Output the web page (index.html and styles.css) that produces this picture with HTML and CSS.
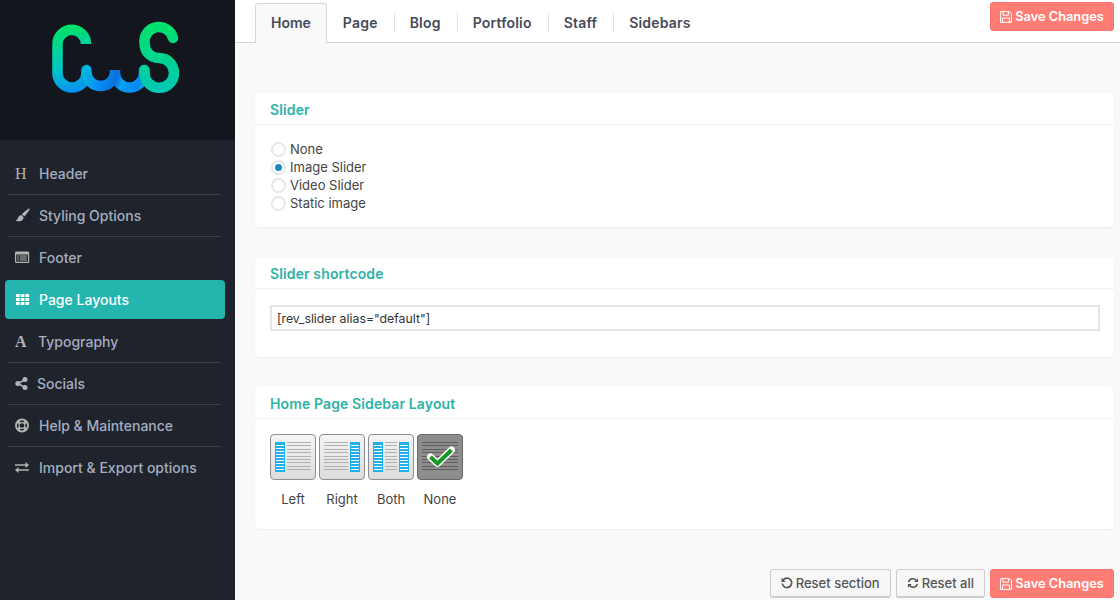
FILE: index.html
```html
<!DOCTYPE html>
<html lang="en">
<head>
<meta charset="utf-8">
<title>Theme Options</title>
<link rel="stylesheet" href="styles.css">
</head>
<body>
<aside class="sidebar">
  <div class="brand">
    <svg class="logo" width="235" height="140" viewBox="0 0 235 140" fill="none" stroke-width="10.5" stroke-linecap="round">
      <defs>
        <linearGradient id="gc" gradientUnits="userSpaceOnUse" x1="70" y1="28" x2="84" y2="92">
          <stop offset="0" stop-color="#00e06c"/><stop offset=".55" stop-color="#00c8c4"/><stop offset="1" stop-color="#0a8cf5"/>
        </linearGradient>
        <linearGradient id="gu" gradientUnits="userSpaceOnUse" x1="86" y1="70" x2="146" y2="90">
          <stop offset="0" stop-color="#00b4e0"/><stop offset=".25" stop-color="#0890f8"/><stop offset=".5" stop-color="#0a70d8"/><stop offset=".6" stop-color="#08a0f4"/><stop offset=".85" stop-color="#0888f4"/><stop offset="1" stop-color="#00b8d0"/>
        </linearGradient>
        <linearGradient id="gs" gradientUnits="userSpaceOnUse" x1="160" y1="26" x2="160" y2="92">
          <stop offset="0" stop-color="#00e06c"/><stop offset="1" stop-color="#00c8b4"/>
        </linearGradient>
      </defs>
      <path stroke="url(#gc)" d="M86 43V44A14.200 14.200 0 0 0 57.500 44V73A14.500 14.500 0 0 0 86.500 73"/>
      <path stroke="url(#gu)" d="M86.500 70V73A14.300 14.300 0 0 0 115 73V70V73A14.500 14.500 0 0 0 144 73V70"/>
      <path stroke="url(#gs)" d="M173 38A14.500 14.500 0 0 0 144.500 43C144.500 52 151 58 159 58C168 58 174 65 174 73A14.700 14.700 0 0 1 144.500 73V70"/>
    </svg>
  </div>
  <ul class="nav">
    <li class="nav-item"><span class="nav-icon glyph">H</span>Header</li>
    <li class="nav-item"><span class="nav-icon"><svg width="15" height="15" viewBox="0 0 15 15"><path fill="currentColor" d="M14.400.6c.4.3.2 1-.3 1.700C12.800 4.300 10.800 7.200 9.300 8.500L6.800 6.300C8.200 4.700 11.200 2.400 13 1c.6-.4 1.100-.6 1.400-.4zM6.200 7l2.400 2.200C8.500 11.600 6.700 13.300 4.300 13.300 2.600 13.300 1 12.700.4 12.300c1.200 0 2.100-.6 2.400-1.700C3.100 8.800 4.500 7.300 6.200 7z"/></svg></span>Styling Options</li>
    <li class="nav-item flat"><span class="nav-icon"><svg width="15" height="15" viewBox="0 0 15 15"><path fill="currentColor" fill-rule="evenodd" d="M1.200 1.500h11.800a1.200 1.200 0 0 1 1.200 1.200v9a1.200 1.200 0 0 1-1.200 1.200H1.200A1.200 1.200 0 0 1 0 11.700v-9A1.200 1.200 0 0 1 1.200 1.500zM1.200 4.500v7.200h11.800V4.500zM2.200 5.600h1.600v1H2.200zM4.800 5.600h7.100v1H4.800zM2.200 7.600h1.600v1H2.200zM4.800 7.600h7.100v1H4.800zM2.200 9.600h1.600v1H2.200zM4.800 9.600h7.100v1H4.800z"/></svg></span>Footer</li>
    <li class="nav-item active"><span class="nav-icon"><svg width="15" height="15" viewBox="0 0 15 15"><path fill="currentColor" d="M1 2h3.700v3H1zM5.700 2h3.700v3H5.700zM10.400 2h3.700v3h-3.700zM1 6h3.700v3H1zM5.700 6h3.700v3H5.700zM10.400 6h3.700v3h-3.700zM1 10h3.700v3H1zM5.700 10h3.700v3H5.700zM10.400 10h3.700v3h-3.700z"/></svg></span>Page Layouts</li>
    <li class="nav-item"><span class="nav-icon nav-icon-a glyph bold">A</span>Typography</li>
    <li class="nav-item"><span class="nav-icon nav-icon-s"><svg width="13" height="15" viewBox="0 0 13 15"><path fill="none" stroke="currentColor" stroke-width="1.500" d="M10 3.500 3 7.500l7 4"/><circle fill="currentColor" cx="2.800" cy="7.500" r="2.500"/><circle fill="currentColor" cx="10" cy="3.400" r="2.500"/><circle fill="currentColor" cx="10" cy="11.600" r="2.500"/></svg></span>Socials</li>
    <li class="nav-item"><span class="nav-icon"><svg width="15" height="15" viewBox="0 0 15 15" fill="none" stroke="currentColor"><circle cx="7" cy="7.500" r="6" stroke-width="1.900"/><circle cx="7" cy="7.500" r="2.900" stroke-width="1.100"/><path stroke-width="2.600" d="M2.800 3.300 5 5.500M11.200 3.300 9 5.500M2.800 11.700 5 9.500M11.200 11.700 9 9.500"/></svg></span>Help &amp; Maintenance</li>
    <li class="nav-item flat"><span class="nav-icon"><svg width="15" height="15" viewBox="0 0 15 15"><path fill="currentColor" d="M0 4.200h10.500V2l3.500 3-3.500 3V5.800H0zM14 9.200H3.500V7L0 10l3.500 3v-2.200H14z"/></svg></span>Import &amp; Export options</li>
  </ul>
</aside>
<main class="main">
  <header class="topbar">
    <nav class="tabs">
      <span class="tab current">Home</span>
      <span class="tab">Page</span>
      <span class="tab">Blog</span>
      <span class="tab">Portfolio</span>
      <span class="tab">Staff</span>
      <span class="tab">Sidebars</span>
    </nav>
    <button class="btn save"><svg width="12" height="12" viewBox="0 0 12 12" fill="none" stroke="currentColor"><path d="M.6.600h8.800l2 2v8.800H.6z"/><path d="M3 .8v3.400h5.400V.8M2.600 11V7h6.800v4"/></svg>Save Changes</button>
  </header>
  <section class="panel first">
    <h2 class="panel-title">Slider</h2>
    <div class="panel-body radios">
      <label class="radio"><span class="dot"></span>None</label>
      <label class="radio"><span class="dot on"></span>Image Slider</label>
      <label class="radio"><span class="dot"></span>Video Slider</label>
      <label class="radio"><span class="dot"></span>Static image</label>
    </div>
  </section>
  <section class="panel">
    <h2 class="panel-title">Slider shortcode</h2>
    <div class="panel-body shortcode">
      <input class="text-input" type="text" value='[rev_slider alias="default"]'>
    </div>
  </section>
  <section class="panel">
    <h2 class="panel-title">Home Page Sidebar Layout</h2>
    <div class="panel-body layouts">
      <div class="layout"><div class="tile"><i class="bar"></i><i class="lines"></i></div>Left</div>
      <div class="layout"><div class="tile"><i class="lines"></i><i class="bar"></i></div>Right</div>
      <div class="layout"><div class="tile"><i class="bar"></i><i class="lines"></i><i class="bar"></i></div>Both</div>
      <div class="layout"><div class="tile selected"><i class="lines"></i>
        <svg class="check" width="28" height="22" viewBox="0 0 28 22"><path d="M3.500 11 10.500 17.500 24.500 4" fill="none" stroke="#fff" stroke-width="7" stroke-linecap="round" stroke-linejoin="round"/><path d="M3.500 11 10.500 17.500 24.500 4" fill="none" stroke="#169a24" stroke-width="4"/></svg>
      </div>None</div>
    </div>
  </section>
  <footer class="actions">
    <button class="btn plain"><svg width="12" height="12" viewBox="0 0 12 12" fill="none" stroke="currentColor" stroke-width="1.700"><path d="M2.200 3A4.700 4.700 0 1 1 1.300 6.500"/><path fill="currentColor" stroke="none" d="M.5.800V5h4.200z"/></svg>Reset section</button>
    <button class="btn plain"><svg width="12" height="12" viewBox="0 0 13 12" fill="none" stroke="currentColor" stroke-width="1.700"><path d="M1.800 5A4.600 4.600 0 0 1 10 3.300M11.200 7A4.600 4.600 0 0 1 3 8.700"/><path fill="currentColor" stroke="none" d="M12 .8V5H7.800zM1 11.200V7h4.200z"/></svg>Reset all</button>
    <button class="btn save"><svg width="12" height="12" viewBox="0 0 12 12" fill="none" stroke="currentColor"><path d="M.6.600h8.800l2 2v8.800H.6z"/><path d="M3 .8v3.400h5.400V.8M2.600 11V7h6.800v4"/></svg>Save Changes</button>
  </footer>
</main>
</body>
</html>
```
FILE: styles.css
```css
* { box-sizing: border-box; }
html, body { margin: 0; height: 100%; overflow: hidden; }
body {
  display: flex;
  font-family: Inter, "Liberation Sans", sans-serif;
  background: #f9f9f9;
  color: #444;
}

/* sidebar */
.sidebar { width: 235px; flex: none; background: #1f232b; }
.brand { height: 140px; background: #13161d; }
.logo { display: block; }
.nav { list-style: none; margin: 0; padding: 13px 0 0; }
.nav-item {
  display: flex;
  align-items: center;
  height: 42px;
  margin: 0 14px 0 8px;
  padding: 0 0 0 7px;
  border-bottom: 1px solid #3d3f43;
  color: #a5aec0;
  font-size: 14px;
  font-weight: 500;
}
.nav-item.flat { border-bottom-color: transparent; }
.nav-item.active {
  height: 39px;
  margin: 1px 10px 2px 5px;
  padding: 0 0 0 10px;
  border: 0;
  border-radius: 4px;
  background: #24b6ae;
  color: #fff;
}
.nav-icon { display: flex; width: 24px; flex: none; color: #b4b4b4; }
.active .nav-icon { color: #fff; }
.nav-icon-a { width: 23px; }
.nav-icon-s { width: 22px; }
.glyph { font: 16px/1 "Liberation Serif", serif; }
.glyph.bold { font-weight: 700; }

/* top bar */
.main { flex: 1; min-width: 0; padding-right: 6px; }
.topbar {
  display: flex;
  justify-content: space-between;
  align-items: flex-start;
  height: 43px;
  margin-right: -6px;
  padding: 2px 6px 0 20px;
  background: #fff;
  border-bottom: 1px solid #d6d6d6;
}
.tabs { display: flex; align-items: flex-start; padding-top: 1px; }
.tab {
  position: relative;
  height: 40px;
  padding: 0 16px;
  color: #454b58;
  font-size: 14px;
  font-weight: 600;
  letter-spacing: .2px;
  line-height: 40px;
}
.tab + .tab:not(:nth-child(2))::before {
  content: "";
  position: absolute;
  left: 0;
  top: 10px;
  height: 20px;
  border-left: 1px solid #e2e2e2;
}
.tab.current {
  height: 40px;
  padding: 0 15px;
  border: 1px solid #d6d6d6;
  border-bottom: 0;
  border-radius: 3px 3px 0 0;
  background: #f9f9f9;
  line-height: 38px;
  letter-spacing: 0;
}

/* panels */
.panel {
  margin: 0 0 30px 20px;
  border-radius: 5px;
  background: #fff;
  box-shadow: 0 1px 2px rgba(0, 0, 0, .05);
}
.panel.first { margin-top: 50px; }
.panel-title {
  height: 32px;
  margin: 0;
  padding: 0 15px;
  border-bottom: 1px solid #f1f1f1;
  color: #2db3a6;
  font-size: 14px;
  font-weight: 600;
  letter-spacing: .12px;
  line-height: 34px;
}
.panel-body { padding: 15px; }
.radios { padding-bottom: 15px; }
.radio {
  display: flex;
  align-items: center;
  height: 18px;
  font-size: 13px;
}
.dot {
  display: flex;
  align-items: center;
  justify-content: center;
  width: 15px;
  height: 15px;
  margin: 0 4px 0 1px;
  border: 2px solid #e4e8ec;
  border-radius: 50%;
  background: #fff;
}
.dot.on::after {
  content: "";
  width: 7px;
  height: 7px;
  border-radius: 50%;
  background: #1d86c6;
}
.shortcode { padding: 16px 14px 26px 15px; }
.text-input {
  display: block;
  width: 100%;
  height: 26px;
  padding: 0 5px;
  border: 2px solid #e4e4e4;
  background: #fff;
  color: #333;
  font: 12.300px Inter, "Liberation Sans", sans-serif;
  outline: 0;
}

/* layout picker */
.layouts { display: flex; gap: 3px; padding-bottom: 21px; }
.layout {
  width: 46px;
  color: #444;
  font-size: 13px;
  line-height: 18px;
  text-align: center;
  text-indent: -3px;
}
.tile {
  position: relative;
  display: flex;
  gap: 2px;
  height: 46px;
  margin-bottom: 10px;
  padding: 7px 4px;
  border: 1px solid #8e8e8e;
  border-radius: 4px;
  background: linear-gradient(#f4f4f4, #dcdcdc);
}
.bar {
  flex: none;
  width: 10px;
  border: 1px solid #20b0ec;
  background: repeating-linear-gradient(#20b0ec 0 2px, #fff 2px 3px);
}
.lines {
  flex: 1;
  background: repeating-linear-gradient(#b0b0b0 0 1px, transparent 1px 3.400px);
}
.tile.selected {
  border-color: #666;
  background: #8d8d8d;
}
.selected .lines {
  background: repeating-linear-gradient(#5d5d5d 0 1px, transparent 1px 3.400px);
}
.check { position: absolute; left: 9px; top: 11px; }

/* buttons */
.btn {
  display: flex;
  align-items: center;
  justify-content: center;
  gap: 3px;
  height: 29px;
  padding: 0;
  border-radius: 3px;
  font: 500 13px Inter, "Liberation Sans", sans-serif;
  white-space: nowrap;
  cursor: pointer;
}
.btn.save {
  width: 124px;
  border: 1px solid #f8746c;
  background: #ff7d75;
  color: #fff;
  font-size: 12.800px;
  font-weight: 600;
}
.btn.plain {
  padding: 0 10px;
  border: 1px solid #ccc;
  border-bottom-width: 2px;
  background: #f7f7f7;
  color: #555;
}
.actions {
  display: flex;
  justify-content: flex-end;
  gap: 5px;
  margin-top: 40px;
}
```
